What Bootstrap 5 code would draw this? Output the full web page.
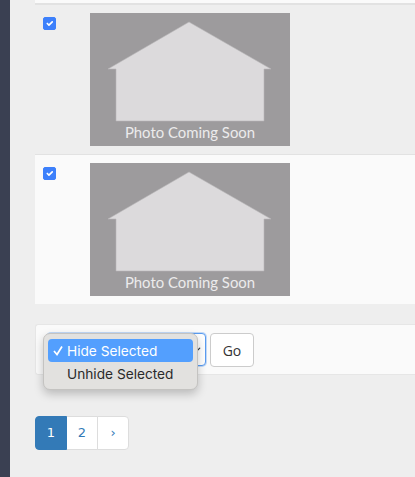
<!DOCTYPE html>
<html lang="en">
<head>
  <meta charset="UTF-8">
  <title>Listings</title>
  <meta name="viewport" content="width=device-width, initial-scale=1">
  <link href="https://cdn.jsdelivr.net/npm/bootstrap@5.3.0/dist/css/bootstrap.min.css" rel="stylesheet">
  <style>
    html, body { height: 100%; overflow: hidden; }
    body { background: #eeeeee; font-family: "Open Sans", "Liberation Sans", sans-serif; }
    .page-wrap { height: 477px; }
    .side-strip { width: 10px; background: #3a4052; flex: none; }
    .main-area { padding-left: 25px; min-width: 0; }
    .row-top { height: 5px; background: #fafafa; border-bottom: 2px solid #e2e2e2; }
    .photo-row { height: 150px; padding: 8px 0 0 8px; border-bottom: 1px solid #e2e2e2; background: #eeeeee; }
    .photo-row.light { background: #fafafa; border-bottom: 0; height: 149px; }
    .photo-row input.form-check-input { width: 13px; height: 13px; margin: 4px 0 0 0; flex: none; border-radius: 2px; background-color: #3d80fb; border-color: #3d80fb; --bs-form-check-bg-image: url("data:image/svg+xml,%3csvg xmlns='http://www.w3.org/2000/svg' viewBox='0 0 20 20'%3e%3cpath fill='none' stroke='%23fff' stroke-width='4' d='M5 10.5l3.5 3.5 6.5-8.5'/%3e%3c/svg%3e"); }
    .photo-box { display: block; width: 200px; height: 133px; margin-left: 34px; flex: none; }
    .photo-text { font-family: "Lato", "Open Sans", sans-serif; font-size: 14.9px; fill: #ecebec; }
    .action-bar { height: 51px; margin-top: 20px; padding: 8px 0 0 11px; background: #fafafa; border: 1px solid #e6e6e6; border-right: 0; border-radius: 3px 0 0 3px; position: relative; }
    .action-select { width: 159px; height: 33px; font-size: 14px; border-color: #5a9cf0; box-shadow: 0 0 0 1px rgba(90,156,240,.35); border-radius: 4px; background-color: #fff; background-position: right 3px center; background-size: 12px 10px; }
    .go-btn { width: 44px; height: 34px; margin-left: 4px; padding: 0; font-size: 14px; color: #333; background: #fff; border: 1px solid #ccc; border-radius: 4px; }
    .select-popup { position: absolute; left: 7px; top: 8px; width: 155px; height: 57px; padding: 5px 4px; background: #e2e1df; border: 1px solid #c4c3c1; border-radius: 7px; box-shadow: 0 4px 10px rgba(0,0,0,.22); font-family: "Inter", "Liberation Sans", sans-serif; font-size: 13.7px; color: #2a2a2a; }
    .popup-item { height: 23px; line-height: 25px; padding-left: 19px; border-radius: 4px; position: relative; white-space: nowrap; }
    .popup-item.picked { background: #539ffe; color: #fff; }
    .popup-tick { position: absolute; left: 5px; top: 6px; width: 10px; height: 11px; }
    .pager-wrap { margin-top: 41px; }
    .pagination { --bs-pagination-padding-x: 0; --bs-pagination-padding-y: 0; --bs-pagination-font-size: 13px; --bs-pagination-color: #337ab7; --bs-pagination-border-color: #ddd; --bs-pagination-active-bg: #337ab7; --bs-pagination-active-border-color: #337ab7; --bs-pagination-border-radius: 4px; margin: 0; }
    .pagination .page-link { width: 32px; height: 34px; line-height: 32px; text-align: center; font-family: "DejaVu Sans", sans-serif; }
  </style>
</head>
<body>

<div class="page-wrap d-flex">
  <div class="side-strip"></div>
  <div class="main-area flex-grow-1">
    <div class="row-top"></div>

    <div class="photo-row d-flex align-items-start">
      <input class="form-check-input" type="checkbox" checked>
      <svg class="photo-box" viewBox="0 0 200 133">
        <rect width="200" height="133" fill="#9d9b9d"/>
        <path d="M99 9 L181 56 H174 V108 H26 V56 H18 Z" fill="#dcdadc" stroke="#b9b7b9" stroke-width=".6"/>
        <text class="photo-text" x="100" y="125" text-anchor="middle">Photo Coming Soon</text>
      </svg>
    </div>

    <div class="photo-row light d-flex align-items-start">
      <input class="form-check-input" type="checkbox" checked>
      <svg class="photo-box" viewBox="0 0 200 133">
        <rect width="200" height="133" fill="#9d9b9d"/>
        <path d="M99 9 L181 56 H174 V108 H26 V56 H18 Z" fill="#dcdadc" stroke="#b9b7b9" stroke-width=".6"/>
        <text class="photo-text" x="100" y="125" text-anchor="middle">Photo Coming Soon</text>
      </svg>
    </div>

    <div class="action-bar d-flex align-items-start">
      <select class="form-select action-select">
        <option>Hide Selected</option>
        <option>Unhide Selected</option>
      </select>
      <button class="btn go-btn" type="button">Go</button>
      <div class="select-popup">
        <div class="popup-item picked">
          <svg class="popup-tick" viewBox="0 0 10 11"><path d="M1 6 L4 9.5 L9 1.5" fill="none" stroke="#fff" stroke-width="1.7"/></svg>
          Hide Selected
        </div>
        <div class="popup-item">Unhide Selected</div>
      </div>
    </div>

    <nav class="pager-wrap">
      <ul class="pagination">
        <li class="page-item active"><a class="page-link" href="#">1</a></li>
        <li class="page-item"><a class="page-link" href="#">2</a></li>
        <li class="page-item"><a class="page-link" href="#">&rsaquo;</a></li>
      </ul>
    </nav>
  </div>
</div>

<script src="https://cdn.jsdelivr.net/npm/bootstrap@5.3.0/dist/js/bootstrap.bundle.min.js"></script>
</body>
</html>
